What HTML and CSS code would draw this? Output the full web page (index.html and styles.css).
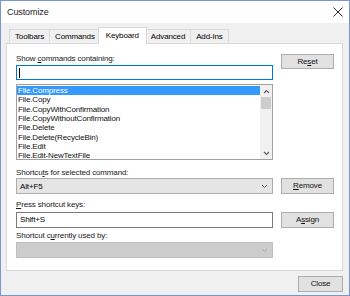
FILE: index.html
```html
<!DOCTYPE html>
<html lang="en">
<head>
    <meta charset="UTF-8">
    <title>Customize</title>
    <link rel="stylesheet" href="styles.css">
</head>
<body>
    <div class="window">
        <div class="titlebar">
            <span class="title">Customize</span>
            <svg class="close-x" width="10" height="10" viewBox="0 0 10 10">
                <path d="M0.5 0.5 L9.5 9.5 M9.5 0.5 L0.5 9.5" stroke="#222" stroke-width="1" fill="none"/>
            </svg>
        </div>

        <div class="body">
            <div class="tabs">
                <div class="tab">Toolbars</div>
                <div class="tab">Commands</div>
                <div class="tab active">Keyboard</div>
                <div class="tab">Advanced</div>
                <div class="tab">Add-Ins</div>
            </div>

            <div class="panel">
                <div class="row">
                    <div class="main">
                        <div class="label">Show <u>c</u>ommands containing:</div>
                        <div class="input focused"><span class="caret"></span></div>
                        <div class="list">
                            <div class="items">
                                <div class="item selected">File.Compress</div>
                                <div class="item">File.Copy</div>
                                <div class="item">File.CopyWithConfirmation</div>
                                <div class="item">File.CopyWithoutConfirmation</div>
                                <div class="item">File.Delete</div>
                                <div class="item">File.Delete(RecycleBin)</div>
                                <div class="item">File.Edit</div>
                                <div class="item">File.Edit-NewTextFile</div>
                            </div>
                            <div class="scrollbar">
                                <svg class="arrow" width="7" height="5" viewBox="0 0 7 5">
                                    <path d="M1 4 L3.5 1.5 L6 4" stroke="#606060" stroke-width="1.2" fill="none"/>
                                </svg>
                                <div class="thumb"></div>
                                <div class="track"></div>
                                <svg class="arrow" width="7" height="5" viewBox="0 0 7 5">
                                    <path d="M1 1 L3.5 3.5 L6 1" stroke="#606060" stroke-width="1.2" fill="none"/>
                                </svg>
                            </div>
                        </div>
                    </div>
                    <div class="side">
                        <button class="btn btn-reset">Re<u>s</u>et</button>
                    </div>
                </div>

                <div class="label label-shortcuts">Shortcu<u>t</u>s for selected command:</div>
                <div class="row row-center">
                    <div class="combo">
                        <span>Alt+F5</span>
                        <svg width="7" height="5" viewBox="0 0 7 5">
                            <path d="M1 1 L3.5 3.5 L6 1" stroke="#606060" stroke-width="1" fill="none"/>
                        </svg>
                    </div>
                    <button class="btn"><u>R</u>emove</button>
                </div>

                <div class="label label-press"><u>P</u>ress shortcut keys:</div>
                <div class="row row-center row-press">
                    <div class="input">Shift+S</div>
                    <button class="btn">A<u>s</u>sign</button>
                </div>

                <div class="label label-used">Shortcut c<u>u</u>rrently used by:</div>
                <div class="row row-used">
                    <div class="combo disabled">
                        <span></span>
                        <svg width="7" height="5" viewBox="0 0 7 5">
                            <path d="M1 1 L3.5 3.5 L6 1" stroke="#a8a8a8" stroke-width="1" fill="none"/>
                        </svg>
                    </div>
                </div>
            </div>

            <div class="footer">
                <button class="btn btn-close">Close</button>
            </div>
        </div>
    </div>
</body>
</html>
```

FILE: styles.css
```css
body {
    margin: 0;
    font-family: "Liberation Sans", Arial, sans-serif;
    font-size: 8px;
    letter-spacing: -0.15px;
    color: #000;
    background-color: white;
}
u {
    text-decoration-thickness: 1px;
    text-underline-offset: 1px;
}
.window {
    width: 350px;
    height: 296px;
    box-sizing: border-box;
    border: 1px solid #7896d6;
    display: flex;
    flex-direction: column;
}
.titlebar {
    height: 22px;
    flex: none;
    background-color: white;
    display: flex;
    align-items: center;
    justify-content: space-between;
    padding: 0 6px 0 6px;
}
.title {
    font-size: 9px;
    letter-spacing: -0.1px;
    color: #1a1a1a;
}
.body {
    flex: 1;
    display: flex;
    flex-direction: column;
    background-color: #f0f0f0;
    padding: 0 6px 0 5px;
}

/* tab strip */
.tabs {
    height: 20px;
    display: flex;
    align-items: flex-end;
    padding-left: 3px;
}
.tab {
    height: 14px;
    box-sizing: border-box;
    border: 1px solid #d9d9d9;
    border-bottom: none;
    background-color: #f0f0f0;
    padding: 0 5px;
    line-height: 13px;
    margin-right: -1px;
    white-space: nowrap;
}
.tab.active {
    height: 17px;
    line-height: 15px;
    background-color: white;
    padding: 0 7px;
    margin: 0 -2px -1px -2px;
    position: relative;
    z-index: 1;
}

/* panel */
.panel {
    height: 228px;
    box-sizing: border-box;
    background-color: white;
    border: 1px solid #d9d9d9;
    padding: 9px 8px 0 9px;
}
.row {
    display: flex;
    gap: 8px;
}
.row-center {
    align-items: center;
}
.main {
    width: 257px;
}
.side {
    width: 53px;
}
.label {
    height: 11px;
    line-height: 11px;
    white-space: nowrap;
    color: #1a1a1a;
}
.label-shortcuts {
    margin-top: 7px;
}
.label-press {
    margin-top: 5px;
}
.row-press {
    margin-top: 2px;
}
.label-used {
    margin-top: 2px;
}
.row-used {
    margin-top: 1px;
}

/* inputs */
.input {
    width: 257px;
    height: 16px;
    box-sizing: border-box;
    border: 1px solid #7a7a7a;
    background-color: white;
    padding-left: 3px;
    line-height: 14px;
}
.input.focused {
    height: 15px;
    margin-top: 1px;
    border-color: #0078d7;
    padding-left: 2px;
    display: flex;
    align-items: center;
}
.caret {
    width: 1px;
    height: 10px;
    background-color: black;
}
.combo {
    width: 257px;
    height: 16px;
    box-sizing: border-box;
    border: 1px solid #adadad;
    background-color: #e5e5e5;
    display: flex;
    align-items: center;
    justify-content: space-between;
    padding: 1px 4px 0 3px;
}
.combo.disabled {
    background-color: #cccccc;
    border-color: #bfbfbf;
}

/* list box */
.list {
    height: 76px;
    margin-top: 4px;
    box-sizing: border-box;
    border: 1px solid #a0a0a0;
    display: flex;
    overflow: hidden;
}
.items {
    flex: 1;
    padding-top: 1px;
}
.item {
    height: 9.33px;
    line-height: 9.33px;
    padding-left: 1px;
    white-space: nowrap;
    color: #111;
}
.item.selected {
    background-color: #3399ff;
    color: white;
}
.scrollbar {
    width: 12px;
    background-color: #f0f0f0;
    display: flex;
    flex-direction: column;
    align-items: center;
}
.arrow {
    flex: none;
    margin: 4px 0 3px;
}
.scrollbar .arrow:last-child {
    margin: 2px 0 3px;
}
.thumb {
    width: 10px;
    height: 12px;
    background-color: #cdcdcd;
    flex: none;
}
.track {
    flex: 1;
}

/* buttons */
.btn {
    height: 16px;
    width: 53px;
    box-sizing: border-box;
    border: 1px solid #adadad;
    background-color: #e1e1e1;
    font-family: inherit;
    font-size: 8px;
    letter-spacing: -0.15px;
    color: #111;
    padding: 0;
    line-height: 14px;
    text-align: center;
}
.btn-reset {
    height: 15px;
    margin-top: 1px;
    line-height: 13px;
}
.footer {
    flex: 1;
    display: flex;
    justify-content: flex-end;
    align-items: flex-start;
    padding-top: 5px;
}
.btn-close {
    width: 45px;
}
```
